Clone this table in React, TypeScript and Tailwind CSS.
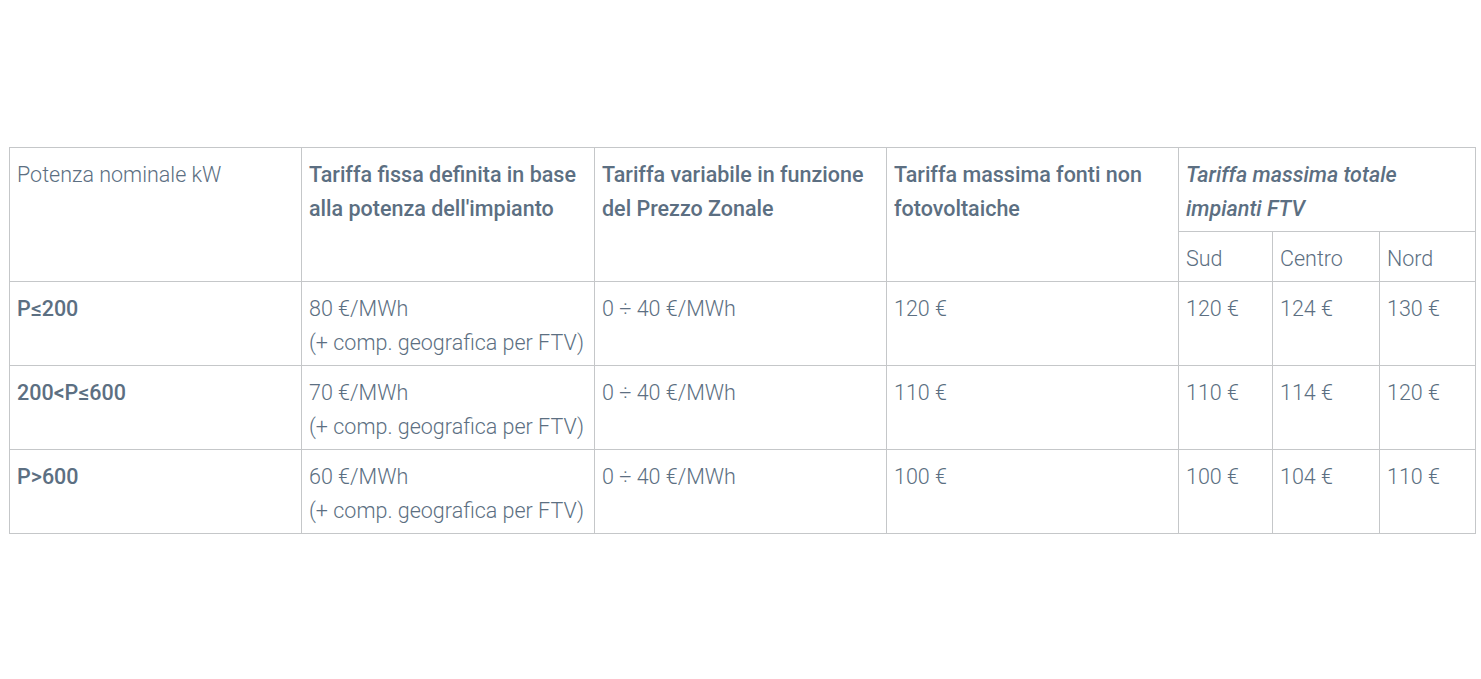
import React from "react";

const font = { fontFamily: "Roboto, 'Liberation Sans', sans-serif" };

const cell = "border border-[#c5c7c9] align-top px-[7px] pt-[10px] pb-[5px] text-[21.5px] leading-[34px] text-[#5c6f82]";

const rows = [
  { p: "P≤200", fix: "80 €/MWh", v: "0 ÷ 40 €/MWh", max: "120 €", s: "120 €", c: "124 €", n: "130 €" },
  { p: "200<P≤600", fix: "70 €/MWh", v: "0 ÷ 40 €/MWh", max: "110 €", s: "110 €", c: "114 €", n: "120 €" },
  { p: "P>600", fix: "60 €/MWh", v: "0 ÷ 40 €/MWh", max: "100 €", s: "100 €", c: "104 €", n: "110 €" },
];

export default function App() {
  return (
    <div className="bg-white w-[1481px] h-[679px] pt-[147px] pl-[9px]" style={font}>
      <table className="table-fixed border-collapse w-[1466px]">
        <colgroup>
          <col className="w-[292px]" />
          <col className="w-[293px]" />
          <col className="w-[292px]" />
          <col className="w-[292px]" />
          <col className="w-[94px]" />
          <col className="w-[107px]" />
          <col className="w-[96px]" />
        </colgroup>
        <thead>
          <tr>
            <th rowSpan={2} className={`${cell} text-left font-light`}>Potenza nominale kW</th>
            <th rowSpan={2} className={`${cell} text-left font-medium`}>Tariffa fissa definita in base alla potenza dell'impianto</th>
            <th rowSpan={2} className={`${cell} text-left font-medium`}>Tariffa variabile in funzione del Prezzo Zonale</th>
            <th rowSpan={2} className={`${cell} text-left font-medium`}>Tariffa massima fonti non fotovoltaiche</th>
            <th colSpan={3} className={`${cell} text-left font-medium italic`}>Tariffa massima totale impianti FTV</th>
          </tr>
          <tr>
            <th className={`${cell} text-left font-light`}>Sud</th>
            <th className={`${cell} text-left font-light`}>Centro</th>
            <th className={`${cell} text-left font-light`}>Nord</th>
          </tr>
        </thead>
        <tbody>
          {rows.map((r) => (
            <tr key={r.p}>
              <td className={`${cell} font-medium`}>{r.p}</td>
              <td className={`${cell} font-light whitespace-nowrap`}>
                {r.fix}
                <br />
                (+ comp. geografica per FTV)
              </td>
              <td className={`${cell} font-light`}>{r.v}</td>
              <td className={`${cell} font-light`}>{r.max}</td>
              <td className={`${cell} font-light`}>{r.s}</td>
              <td className={`${cell} font-light`}>{r.c}</td>
              <td className={`${cell} font-light`}>{r.n}</td>
            </tr>
          ))}
        </tbody>
      </table>
    </div>
  );
}
